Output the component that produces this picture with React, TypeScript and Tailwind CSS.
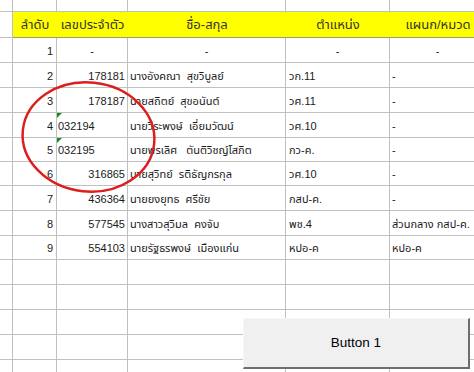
import React from "react";

type Row = {
  no: string;
  id: string;
  idLeft?: boolean;
  name: string;
  pos: string;
  dept: string;
  center?: boolean;
  h: string;
};

const rows: Row[] = [
  { no: "1", id: "-", name: "-", pos: "-", dept: "-", center: true, h: "h-[25px]" },
  { no: "2", id: "178181", name: "นางอังคณา  สุขวิบูลย์", pos: "วก.11", dept: "-", h: "h-[25px]" },
  { no: "3", id: "178187", name: "นายสถิตย์  สุขอนันต์", pos: "วศ.11", dept: "-", h: "h-[25px]" },
  { no: "4", id: "032194", idLeft: true, name: "นายวีระพงษ์  เอี่ยมวัฒน์", pos: "วศ.10", dept: "-", h: "h-[25px]" },
  { no: "5", id: "032195", idLeft: true, name: "นายพรเลิศ   ตันติวิชญ์โสภิต", pos: "กว-ค.", dept: "-", h: "h-[24px]" },
  { no: "6", id: "316865", name: "นายสุวิทย์  รติธัญกรกุล", pos: "วศ.10", dept: "-", h: "h-[24px]" },
  { no: "7", id: "436364", name: "นายยงยุทธ  ศรีชัย", pos: "กสป-ค.", dept: "-", h: "h-[25px]" },
  { no: "8", id: "577545", name: "นางสาวสุวิมล  คงจับ", pos: "พช.4", dept: "ส่วนกลาง กสป-ค.", h: "h-[25px]" },
  { no: "9", id: "554103", name: "นายรัฐธรพงษ์  เมืองแก่น", pos: "หปอ-ค", dept: "หปอ-ค", h: "h-[24px]" },
];

const emptyHeights = ["h-[25px]", "h-[25px]", "h-[25px]", "h-[25px]", "h-[25px]", "h-[25px]"];

const cell = "border-r border-b border-[#c0c0c0] flex items-center overflow-hidden whitespace-pre shrink-0";

function EmptyRow({ h }: { h: string }) {
  return (
    <div className={`flex ${h}`}>
      <div className={`${cell} w-[13px]`} />
      <div className={`${cell} w-[44px]`} />
      <div className={`${cell} w-[71px]`} />
      <div className={`${cell} w-[158px]`} />
      <div className={`${cell} w-[104px]`} />
      <div className={`${cell} w-[96px]`} />
    </div>
  );
}

export default function App() {
  return (
    <div
      className="relative w-[474px] h-[372px] overflow-hidden bg-white text-[11px] text-[#1a1a1a]"
      style={{ fontFamily: '"Liberation Sans", "Noto Sans Thai", Tahoma, "DejaVu Sans", sans-serif' }}
    >
      <div className="w-[486px]">
        {/* blank top row */}
        <EmptyRow h="h-[12px]" />

        {/* header row */}
        <div className="flex h-[26px]">
          <div className={`${cell} w-[13px]`} />
          <div className="flex flex-1 bg-[#ffff00] border-b border-[#9c9c6c] text-[13px] text-[#333] pt-[1px]">
            <div className="w-[44px] flex items-center justify-center">ลำดับ</div>
            <div className="w-[71px] flex items-center justify-center">เลขประจำตัว</div>
            <div className="w-[158px] flex items-center justify-center">ชื่อ-สกุล</div>
            <div className="w-[104px] flex items-center justify-center">ตำแหน่ง</div>
            <div className="w-[96px] flex items-center justify-center">แผนก/หมวด</div>
          </div>
        </div>

        {/* data rows */}
        {rows.map((r) => (
          <div key={r.no} className={`flex ${r.h}`}>
            <div className={`${cell} w-[13px]`} />
            <div className={`${cell} w-[44px] justify-end pr-[3px] pt-[2px]`}>{r.no}</div>
            <div
              className={`${cell} relative w-[71px] pt-[2px] ${
                r.center ? "justify-center" : r.idLeft ? "justify-start pl-[1px]" : "justify-end pr-[2px]"
              }`}
            >
              {r.idLeft && (
                <span className="absolute left-0 top-0 w-0 h-0 border-t-[5px] border-r-[5px] border-t-[#1f8a1f] border-r-transparent" />
              )}
              {r.id}
            </div>
            <div className={`${cell} w-[158px] pt-[2px] ${r.center ? "justify-center" : "pl-[2px]"}`}>{r.name}</div>
            <div className={`${cell} w-[104px] pt-[2px] ${r.center ? "justify-center" : "pl-[3px]"}`}>{r.pos}</div>
            <div className={`${cell} w-[96px] pt-[2px] overflow-visible ${r.center ? "justify-center" : "pl-[2px]"}`}>{r.dept}</div>
          </div>
        ))}

        {emptyHeights.map((h, i) => (
          <EmptyRow key={i} h={h} />
        ))}
      </div>

      {/* hand-drawn red ring */}
      <svg className="absolute left-0 top-0 pointer-events-none" width="474" height="372">
        <ellipse
          cx="88.5"
          cy="137"
          rx="66"
          ry="54.5"
          transform="rotate(6 88.5 137)"
          fill="none"
          stroke="#dc1e1e"
          strokeWidth="2.5"
        />
      </svg>

      {/* form button */}
      <button
        className="absolute left-[243px] top-[318px] w-[227px] h-[51px] bg-[#f0f0f0] border-t border-l border-t-[#f8f8f8] border-l-[#f8f8f8] border-r-2 border-b-2 border-r-[#6e6e6e] border-b-[#6e6e6e] text-[13.5px] text-black flex items-center justify-center"
        style={{ fontFamily: '"Liberation Sans", Arial, sans-serif' }}
      >
        Button 1
      </button>
    </div>
  );
}
